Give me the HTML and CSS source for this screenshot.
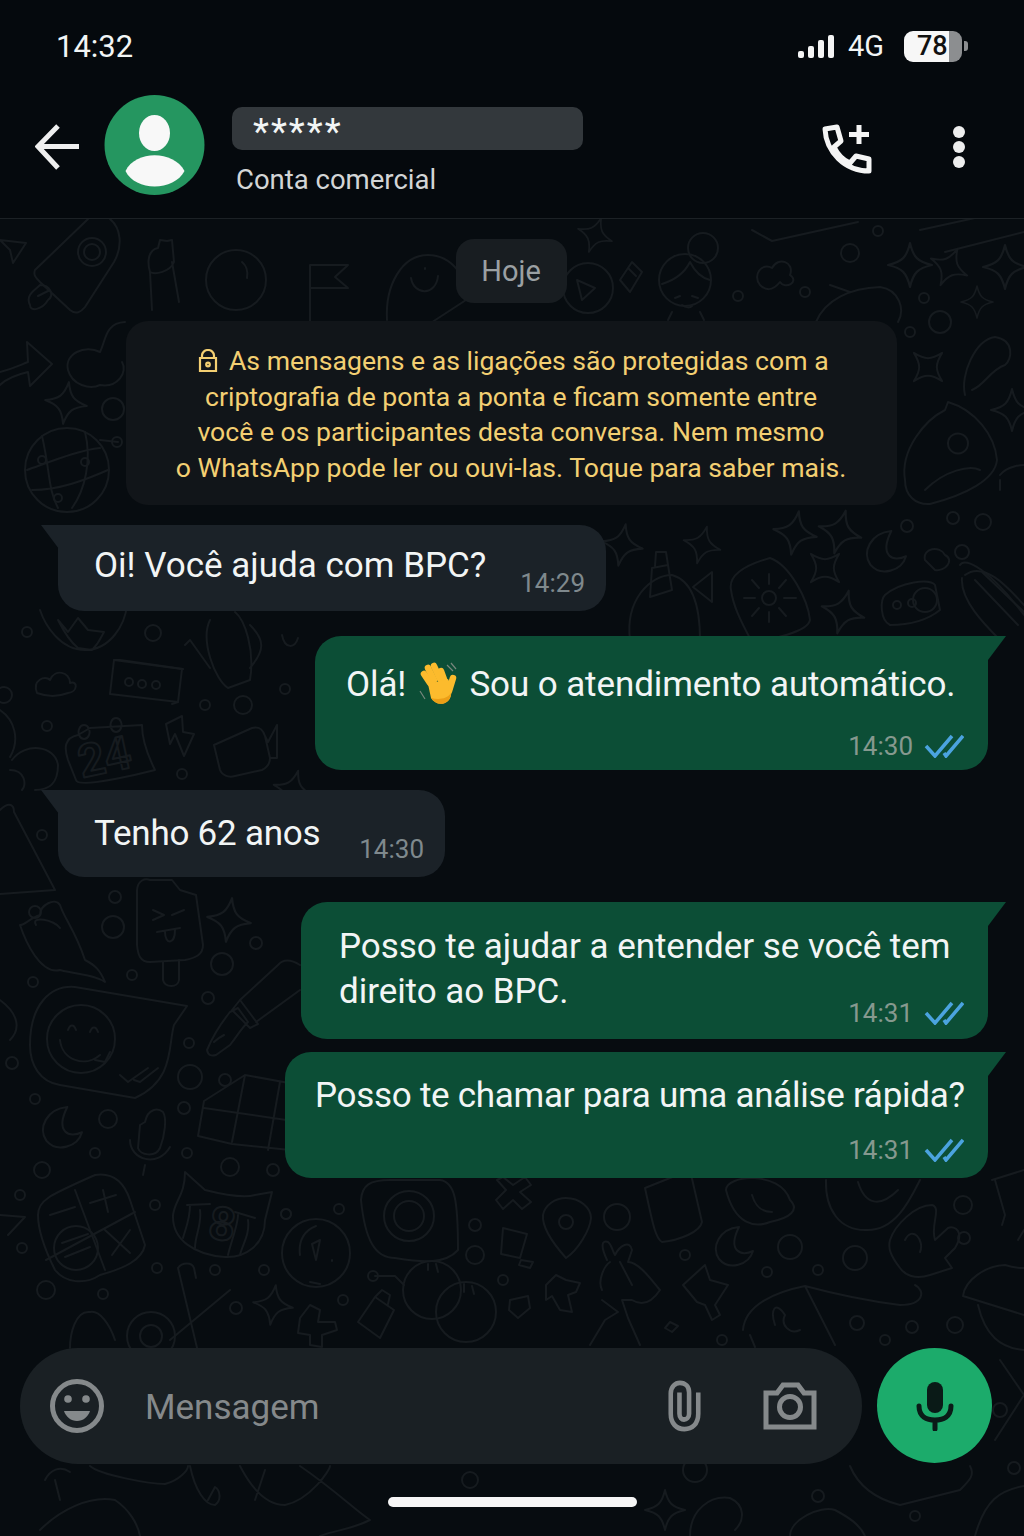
FILE: index.html
```html
<!DOCTYPE html>
<html lang="pt-BR">
<head>
    <meta charset="UTF-8">
    <title>Conversa</title>
    <link rel="stylesheet" href="styles.css">
</head>
<body>
    <div class="status-bar">
        <span class="clock">14:32</span>
        <div class="status-right">
            <div class="signal">
                <span class="bar bar1"></span>
                <span class="bar bar2"></span>
                <span class="bar bar3"></span>
                <span class="bar bar4"></span>
            </div>
            <span class="network">4G</span>
            <div class="battery">
                <div class="battery-body">
                    <div class="battery-fill">78</div>
                    <div class="battery-rest"></div>
                </div>
                <div class="battery-nub"></div>
            </div>
        </div>
    </div>

    <div class="header">
        <svg class="back" viewBox="0 0 46 46">
            <path d="M44 22.500H4M23 2 3 22.500 23 44"/>
        </svg>
        <svg class="avatar" viewBox="0 0 100 100">
            <circle class="avatar-bg" cx="50" cy="50" r="50"/>
            <ellipse class="avatar-fg" cx="50" cy="38" rx="15.500" ry="18"/>
            <path class="avatar-fg" d="M21 76C31 55 69 55 80 76 70 96 31 97 21 76Z"/>
        </svg>
        <div class="contact">
            <div class="contact-name">*****</div>
            <div class="contact-sub">Conta comercial</div>
        </div>
        <div class="actions">
            <svg class="add-call" viewBox="0 0 50 50">
                <path d="M3 5 15 3 19 17 12 23C16 31 21 36 28 39L34 32 47 35 47 47C23 47 4 28 3 5Z"/>
                <path d="M27 10.500H47M37 1V20"/>
            </svg>
            <div class="dots">
                <span></span>
                <span></span>
                <span></span>
            </div>
        </div>
    </div>

    <div class="chat">
        <svg class="wallpaper" viewBox="0 219 1024 1317">
            <defs>
                <path id="star" d="M0-20C3-7 7-3 20 0 7 3 3 7 0 20-3 7-7 3-20 0-7-3-3-7 0-20Z"/>
                <path id="moon" d="M6-20C-14-18-22 0-14 12-4 24 16 18 20 4 8 10-6 4 6-20Z"/>
            </defs>

            <!-- top left -->
            <path d="M0 240 26 243 13 263 10 250Z"/>
            <path d="M35 270C33 275 36 278 40 282L70 310C76 315 81 312 85 307L114 262C123 246 121 228 110 219M35 270 88 219"/>
            <circle cx="92" cy="252" r="14"/><circle cx="92" cy="252" r="8"/>
            <path d="M30 305C25 295 35 290 40 285 50 285 55 295 48 300 42 310 30 312 30 305ZM38 296 50 290"/>
            <path d="M150 272C147 262 148 250 158 248L160 240 167 241 172 240 174 262C170 272 155 275 150 272ZM150 272 152 310M172 262 179 302"/>
            <circle cx="236" cy="280" r="30"/><path d="M242 262C247 266 248 272 247 278"/>
            <path d="M310 330V265H348L335 277 348 288H310"/>
            <path d="M387 320C385 285 402 255 428 255 452 255 470 280 466 300L420 330"/>
            <path d="M411 278C414 296 436 296 438 276M425 268V269"/>
            <path d="M0 372C15 368 20 365 28 362L27 342 52 364 30 386 28 372C15 375 5 380 0 385"/>
            <path d="M125 322C105 323 106 340 100 352 85 344 64 354 68 370 72 385 90 390 100 385 118 388 128 372 122 362"/>
            <use href="#star" transform="translate(66 403) rotate(8) scale(1.050)"/>
            <circle cx="67" cy="470" r="42"/>
            <path d="M42 436C50 470 48 490 58 508M27 470C55 460 80 450 100 448M32 490C60 490 85 480 108 470M85 432C92 460 85 490 72 508M100 440 118 442"/>
            <circle cx="42" cy="460" r="4"/><circle cx="85" cy="462" r="4"/><circle cx="58" cy="498" r="4"/>
            <circle cx="117" cy="442" r="5"/><circle cx="113" cy="409" r="11"/>

            <!-- top, behind the date and the notice -->
            <use href="#star" transform="translate(595 235) rotate(20) scale(.9)"/>
            <circle cx="588" cy="288" r="25"/><path d="M577 280 595 288 582 300Z"/>
            <path d="M620 280 632 262 642 272 630 292ZM628 268 636 276"/>
            <circle cx="685" cy="280" r="26"/><circle cx="703" cy="248" r="15"/>
            <path d="M662 284C675 280 685 272 690 262 695 272 702 278 710 280M675 298 680 296M692 296 698 298M682 305C686 308 690 308 692 306M668 320 672 312M700 312 704 320"/>
            <path d="M760 285C752 275 762 262 772 268 778 256 795 262 790 275 800 282 785 290 780 282 772 292 765 290 760 285Z"/>
            <path d="M752 230 772 241 858 222M816 322C825 300 850 288 880 287 900 290 905 310 898 322M830 285 850 292"/>
            <path d="M920 230 975 218M945 252 1024 232"/>
            <circle cx="850" cy="253" r="9"/><circle cx="738" cy="296" r="5"/><circle cx="805" cy="292" r="5"/><circle cx="878" cy="231" r="5"/><circle cx="924" cy="298" r="5"/><circle cx="940" cy="322" r="11"/><circle cx="910" cy="332" r="5"/>
            <use href="#star" transform="translate(910 265) scale(1.100)"/>
            <use href="#star" transform="translate(949 267) rotate(25) scale(1)"/>
            <use href="#star" transform="translate(1005 267) scale(1.100)"/>
            <use href="#star" transform="translate(977 302) scale(.8)"/>

            <!-- right column -->
            <use href="#star" transform="translate(928 367) rotate(45) scale(1)"/>
            <path d="M965 395C960 375 975 340 995 337 1015 340 1012 360 1005 365 990 370 985 385 972 390"/>
            <use href="#star" transform="translate(1012 410) scale(1.050)"/>
            <path d="M905 480C900 450 925 420 945 410L948 402C975 410 995 435 997 460 995 480 965 495 930 504 915 505 905 495 905 480ZM925 490C945 470 970 465 980 470M948 444A10 10 0 1 0 948 443Z"/>
            <path d="M1000 475C1008 465 1024 465 1024 465M1000 480V490"/>
            <use href="#star" transform="translate(795 533) rotate(10) scale(1.100)"/>
            <use href="#star" transform="translate(840 532) rotate(15) scale(1.100)"/>
            <use href="#moon" transform="translate(885 552) scale(1.050)"/>
            <use href="#star" transform="translate(825 568) rotate(45) scale(1)"/>
            <use href="#star" transform="translate(622 545) rotate(10) scale(1.050)"/>
            <use href="#star" transform="translate(702 545) rotate(15) scale(.95)"/>
            <use href="#star" transform="translate(843 612) rotate(15) scale(1.100)"/>
            <path d="M925 560C922 548 940 545 945 555 955 560 945 572 935 570ZM960 565C965 556 990 570 1024 615"/>
            <circle cx="953" cy="518" r="6"/><circle cx="983" cy="522" r="8"/><circle cx="907" cy="526" r="6"/><circle cx="962" cy="552" r="7"/>
            <path d="M652 568 668 565 672 590 650 597ZM655 566 656 552H666L668 565"/>
            <path d="M693 587 712 572 712 602Z"/>
            <path d="M731 590C728 575 745 565 770 558 790 565 808 600 810 620 808 632 770 640 752 642 740 620 733 605 731 590Z"/>
            <circle cx="769" cy="598" r="7"/>
            <path d="M769 584V574M784 598H796M769 612V622M755 598H744M779 588 786 580M779 608 786 616M759 608 752 616M759 588 752 580"/>
            <path d="M885 595C900 582 930 578 935 585L940 610C925 622 905 625 890 625 880 620 880 600 885 595Z"/>
            <circle cx="897" cy="605" r="4"/><circle cx="912" cy="603" r="4"/><circle cx="925" cy="600" r="12"/>
            <path d="M965 575C985 560 1010 590 1024 605M962 578C960 600 985 625 1000 640M975 580 1018 625M982 572 1024 612"/>
            <path d="M630 640C625 600 650 575 672 575 690 580 700 600 700 640"/>

            <!-- left, middle -->
            <path d="M40 610C45 625 60 650 85 650 110 650 125 625 127 605M58 620C62 628 68 640 78 648L92 650C100 642 102 635 104 632L88 630 78 618 68 632Z"/>
            <path d="M37 693C32 680 45 675 50 680 55 668 70 672 70 683 78 680 78 692 68 693 55 698 45 696 37 693Z"/>
            <path d="M114 660 182 669 178 702 110 694Z"/><path d="M114 660 120 660 183 669M178 702 172 704"/>
            <circle cx="129" cy="682" r="4"/><circle cx="142" cy="684" r="4"/><circle cx="156" cy="685" r="4"/>
            <path d="M210 620C200 640 215 680 228 688L250 680C255 650 245 620 235 612M185 645 190 640 210 668M250 625C265 640 265 650 250 668"/>
            <path d="M78 735C64 738 64 748 68 760L76 780C78 790 155 770 155 770 145 750 142 735 142 725L90 728ZM84 725A5.500 7 0 1 0 84.100 725ZM116 718A5.500 7 0 1 0 116.100 718Z"/>
            <text class="doodle-num" x="82" y="778" transform="rotate(-12 82 778)">24</text>
            <path d="M166 724 182 716 183 732 194 734 184 756 175 734 170 744Z"/>
            <path d="M214 745 252 728C260 726 263 730 265 736L270 758C270 764 266 768 262 770L235 776C228 778 222 775 220 770ZM265 736 268 742 277 725 277 758 270 758"/>
            <path d="M0 710C15 720 20 740 10 757M12 760C25 742 55 745 58 765 58 785 48 790 35 790M10 770C25 770 27 785 22 790"/>
            <path d="M0 810C10 800 14 806 14 812L55 890 0 894"/>
            <circle cx="153" cy="633" r="8"/><circle cx="27" cy="632" r="5"/><circle cx="243" cy="705" r="9"/><circle cx="205" cy="705" r="5"/><circle cx="285" cy="689" r="5"/><circle cx="182" cy="774" r="5"/><circle cx="47" cy="726" r="5"/><circle cx="42" cy="835" r="5"/><circle cx="4" cy="695" r="8"/>
            <path d="M282 635C285 650 295 648 298 638"/>
            <use href="#star" transform="translate(293 790) rotate(15) scale(1)"/>

            <!-- left, lower -->
            <path d="M20 925C25 940 40 975 60 970 80 975 95 975 105 982 100 970 95 965 85 960 75 930 65 920 60 905 55 897 40 905 40 915 30 918 25 925 20 925Z"/>
            <path d="M36 925C30 915 55 920 60 928"/>
            <path d="M137 890C138 880 145 878 150 880H172L180 890 196 895 203 945C203 955 195 958 185 960L150 962C140 962 138 955 137 945Z"/>
            <path d="M163 962V980C165 988 178 988 179 980V960"/>
            <path d="M153 910 164 915 153 920M184 910 172 915M157 932 180 928M165 932C165 945 175 945 175 930"/>
            <use href="#star" transform="translate(229 920) rotate(8) scale(1.100)"/>
            <path d="M30 1045C30 1005 50 985 75 987L187 1006 174 1025C168 1045 175 1080 135 1098L60 1085C40 1082 30 1065 30 1045Z"/>
            <circle cx="81" cy="1039" r="34"/>
            <path d="M60 1040C62 1060 85 1068 100 1055M68 1030C70 1024 74 1024 76 1030M90 1032C92 1026 96 1026 98 1032M95 1060 105 1062 110 1052"/>
            <path d="M120 1075 128 1082 148 1068M134 1080 140 1082 158 1068"/>
            <path d="M207 1050C208 1056 212 1056 216 1055L230 1045C238 1035 240 1030 248 1022L238 1008 230 1012C222 1022 212 1038 207 1050ZM232 1010 250 1028 258 1024 240 1000ZM240 1000 278 965C284 958 292 960 300 965M256 1022 300 990M214 1042C218 1038 222 1036 224 1035"/>
            <path d="M204 1101 245 1075 300 1085M245 1075 232 1142M280 1082 268 1150M198 1136 232 1144 290 1150M204 1101 198 1136M204 1108 300 1122"/>
            <use href="#moon" transform="translate(61 1128) scale(1.050)"/>
            <circle cx="108" cy="1119" r="9"/>
            <path d="M140 1125 145 1122C148 1108 158 1108 163 1112 167 1118 165 1135 160 1148 155 1158 140 1155 138 1148ZM130 1140C130 1160 158 1168 170 1147M145 1165 143 1175"/>
            <path d="M38 1215C38 1200 50 1195 95 1175 115 1172 125 1185 130 1200L145 1245C142 1260 125 1268 100 1275 85 1285 65 1283 55 1270 45 1250 38 1230 38 1215Z"/>
            <path d="M75 1190 105 1270M46 1260 135 1212M50 1215 75 1207M90 1203 116 1195M103 1190 108 1212M105 1230 130 1253M130 1230 112 1255"/>
            <circle cx="76" cy="1248" r="22"/><path d="M62 1243 88 1234M65 1257 90 1247"/>
            <path d="M185 1172 205 1190C225 1195 245 1198 255 1195L272 1192 265 1220C265 1245 245 1258 225 1257 195 1255 172 1240 173 1215 175 1200 185 1195 185 1172Z"/>
            <path d="M187 1205 210 1204M190 1205C190 1220 185 1230 183 1238M200 1210C202 1225 195 1235 195 1248M235 1212 255 1218M238 1215C238 1225 230 1245 228 1255M248 1220C250 1235 242 1245 240 1255"/>
            <text class="doodle-num" x="207" y="1238" transform="rotate(8 207 1238)">8</text>
            <circle cx="151" cy="1336" r="24"/><circle cx="151" cy="1336" r="11"/>
            <path d="M170 1340 230 1290M178 1268 198 1352M178 1268C182 1262 192 1262 194 1268L196 1278"/>
            <use href="#star" transform="translate(273 1305) rotate(8) scale(1)"/>
            <path d="M70 1348C70 1335 75 1310 90 1312 100 1310 110 1325 115 1340"/>
            <path d="M0 1000C20 1015 20 1030 10 1040"/><path d="M0 1215 25 1217 8 1235"/>
            <circle cx="20" cy="1195" r="5"/><circle cx="22" cy="1248" r="5"/>
            <circle cx="115" cy="897" r="6"/><circle cx="35" cy="912" r="6"/><circle cx="113" cy="927" r="11"/><circle cx="132" cy="975" r="5"/><circle cx="33" cy="982" r="5"/><circle cx="222" cy="964" r="11"/><circle cx="256" cy="943" r="6"/><circle cx="208" cy="998" r="6"/><circle cx="189" cy="1043" r="5"/><circle cx="190" cy="1077" r="12"/><circle cx="225" cy="1080" r="6"/><circle cx="12" cy="1063" r="6"/><circle cx="35" cy="1099" r="5"/><circle cx="184" cy="1108" r="6"/><circle cx="187" cy="1153" r="5"/><circle cx="95" cy="1153" r="5"/><circle cx="42" cy="1170" r="8"/><circle cx="155" cy="1205" r="5"/><circle cx="230" cy="1167" r="9"/><circle cx="273" cy="1170" r="6"/><circle cx="286" cy="1214" r="5"/><circle cx="157" cy="1268" r="5"/><circle cx="215" cy="1270" r="5"/><circle cx="264" cy="1270" r="5"/><circle cx="46" cy="1290" r="9"/><circle cx="103" cy="1294" r="5"/><circle cx="236" cy="1308" r="6"/>

            <!-- bottom strip -->
            <circle cx="316" cy="1253" r="34"/><path d="M300 1255C298 1240 305 1230 316 1226M312 1244 320 1240 316 1260Z M310 1282 320 1284M332 1260V1261"/>
            <path d="M361 1200C362 1185 370 1180 390 1180H440C455 1182 458 1200 458 1250 445 1265 420 1262 395 1258 375 1258 365 1240 361 1200Z"/>
            <circle cx="409" cy="1216" r="25"/><circle cx="409" cy="1216" r="15"/>
            <path d="M496 1200 506 1190 497 1180 503 1177 513 1185 525 1177 531 1185 520 1192 531 1202 522 1209 513 1200 503 1209Z"/>
            <path d="M566 1258C550 1240 542 1225 543 1215 545 1205 555 1198 566 1198 580 1198 591 1208 591 1218 590 1230 578 1250 566 1258Z"/>
            <circle cx="566" cy="1222" r="7"/><circle cx="617" cy="1217" r="13"/><circle cx="475" cy="1225" r="6"/><circle cx="475" cy="1255" r="9"/><circle cx="339" cy="1209" r="5"/><circle cx="286" cy="1214" r="5"/>
            <path d="M503 1228 527 1234 520 1258 501 1254Z"/><path d="M521 1260 533 1262 530 1268 519 1265Z"/>
            <path d="M645 1188 690 1170 702 1222C700 1232 680 1240 662 1242 655 1238 652 1220 645 1188Z"/>
            <path d="M726 1190C726 1175 780 1170 790 1200 800 1210 790 1218 770 1222 755 1228 735 1225 726 1190ZM752 1195C755 1205 760 1212 772 1212"/>
            <use href="#moon" transform="translate(733 1247) scale(1)"/>
            <circle cx="685" cy="1255" r="5"/><circle cx="790" cy="1247" r="12"/><circle cx="855" cy="1258" r="12"/><circle cx="767" cy="1272" r="5"/><circle cx="818" cy="1270" r="5"/><circle cx="964" cy="1238" r="6"/><circle cx="963" cy="1205" r="9"/>
            <path d="M826 1180C825 1210 840 1230 865 1230 895 1232 910 1200 920 1180M858 1182C865 1205 880 1208 898 1190"/>
            <path d="M890 1240C895 1225 915 1205 932 1205 942 1208 930 1225 935 1240L948 1228C955 1225 965 1232 955 1248L945 1258 952 1268 930 1275C915 1280 905 1275 900 1268 890 1255 888 1248 890 1240ZM905 1240C912 1225 925 1240 920 1252"/>
            <path d="M992 1180 1024 1170M995 1180 1005 1215 1002 1225M1024 1230 1018 1240"/>
            <path d="M963 1296C965 1280 985 1266 1005 1265 1015 1268 1024 1268 1024 1268M963 1296 1024 1315M978 1305C985 1335 1000 1348 1024 1350"/>
            <path d="M300 1318 310 1305 320 1310 318 1322 335 1322 337 1330 322 1335 322 1347 310 1345 310 1335 298 1333Z"/>
            <path d="M358 1322 375 1297 394 1310 380 1338ZM375 1297 382 1290 390 1295 388 1304"/>
            <circle cx="432" cy="1290" r="29"/><circle cx="466" cy="1312" r="30"/>
            <path d="M428 1264V1270M436 1264 438 1272M464 1284V1292M472 1286 474 1294"/>
            <path d="M375 1276 395 1276 404 1285"/><circle cx="373" cy="1276" r="5"/><circle cx="503" cy="1280" r="5"/><circle cx="343" cy="1300" r="5"/>
            <path d="M510 1300 528 1296 530 1308 518 1318 509 1310Z"/>
            <path d="M546 1285 556 1275 566 1280 580 1283 576 1292 568 1295 572 1312 560 1310 552 1296 546 1300Z"/>
            <path d="M607 1260C600 1245 602 1240 608 1242 612 1245 612 1250 615 1255 620 1245 630 1240 632 1250L628 1262C640 1262 655 1285 660 1290 650 1305 640 1305 632 1300L622 1300 628 1318 640 1345M602 1290C597 1280 605 1265 610 1262M602 1300 618 1312 605 1320 590 1345M620 1262 632 1285"/>
            <path d="M683 1285 705 1265 710 1280 728 1285 715 1305 720 1315 712 1320 705 1305 697 1302Z"/>
            <path d="M743 1330C745 1305 775 1292 805 1286 820 1290 860 1300 900 1305 925 1305 925 1290 915 1285M805 1286 835 1345M750 1335 755 1347M775 1325C770 1310 775 1300 785 1315 780 1325 790 1335 800 1330"/>
            <path d="M670 1322 678 1326 672 1332 665 1328Z"/>
            <circle cx="857" cy="1323" r="7"/><circle cx="912" cy="1327" r="6"/><circle cx="955" cy="1325" r="8"/><circle cx="885" cy="1340" r="5"/><circle cx="722" cy="1340" r="5"/>

            <!-- under the composer -->
            <path d="M40 1530C60 1510 90 1495 115 1500 130 1510 138 1525 140 1536"/>
            <path d="M45 1480C50 1470 60 1465 70 1472M60 1500 55 1480"/>
            <path d="M90 1466C100 1475 150 1484 165 1484 180 1480 188 1470 188 1466M190 1466C195 1490 205 1505 215 1505 222 1500 220 1490 215 1487L208 1500M240 1466C255 1495 270 1505 285 1505 310 1500 330 1470 330 1466M255 1500 265 1470M300 1466C335 1490 355 1510 370 1520 350 1530 335 1530 320 1536"/>
            <use href="#star" transform="translate(665 1510) scale(1)"/>
            <path d="M690 1536C690 1510 710 1495 730 1498 745 1505 745 1520 735 1530"/>
            <path d="M850 1466C860 1490 880 1500 900 1505L960 1490C970 1480 975 1475 970 1466"/>
            <path d="M790 1536C790 1520 820 1505 835 1510 850 1518 860 1525 865 1536"/>
            <circle cx="818" cy="1496" r="6"/><circle cx="915" cy="1516" r="5"/><circle cx="1014" cy="1468" r="6"/><circle cx="695" cy="1470" r="12"/><circle cx="470" cy="1480" r="8"/><circle cx="1000" cy="1410" r="7"/>
            <path d="M995 1440 1024 1395 1000 1360M975 1536C985 1500 1000 1490 1024 1486"/>
        </svg>

        <div class="chat-inner">
            <div class="date-chip">Hoje</div>
            <div class="notice">
                <p>
                    <svg class="lock" viewBox="0 0 20 24">
                        <path d="M4 9V6.500A6 5.500 0 0 1 16 6.500V9M2 9H18V22H2Z"/>
                        <circle cx="10" cy="15.500" r="1.800"/>
                    </svg>
                    As mensagens e as ligações são protegidas com a<br>
                    criptografia de ponta a ponta e ficam somente entre<br>
                    você e os participantes desta conversa. Nem mesmo<br>
                    o WhatsApp pode ler ou ouvi-las. Toque para saber mais.
                </p>
            </div>

            <div class="bubble in msg1">
                <span class="text">Oi! Você ajuda com BPC?</span>
                <span class="time">14:29</span>
            </div>

            <div class="bubble out msg2">
                <div class="text">Olá!
                    <svg class="wave" viewBox="0 0 42 44">
                        <path class="wave-lines" d="M30 3 36 9M34 1 39 7M3 29 8 37"/>
                        <g class="wave-fingers">
                            <path d="M13 21 7 12"/>
                            <path d="M17 18 11 6"/>
                            <path d="M23 17 17 4"/>
                            <path d="M28 20 24 9"/>
                            <path d="M32 29 36 16"/>
                        </g>
                        <path class="wave-palm" d="M11 22 31 17C35 24 36 34 31 39 25 44 18 42 14 36Z"/>
                        <path class="wave-shade" d="M14 36C18 42 25 44 31 39 33 37 34 34 34 31 30 37 22 38 14 36Z"/>
                    </svg>
                    Sou o atendimento automático.</div>
                <div class="meta">
                    <span class="time">14:30</span>
                    <svg class="ticks" viewBox="0 0 40 24"><path d="M2 12 11 22 28 2M20 19 22 22 39 2"/></svg>
                </div>
            </div>

            <div class="bubble in msg3">
                <span class="text">Tenho 62 anos</span>
                <span class="time">14:30</span>
            </div>

            <div class="bubble out msg4">
                <div class="text">Posso te ajudar a entender se você tem<br>direito ao BPC.</div>
                <div class="meta">
                    <span class="time">14:31</span>
                    <svg class="ticks" viewBox="0 0 40 24"><path d="M2 12 11 22 28 2M20 19 22 22 39 2"/></svg>
                </div>
            </div>

            <div class="bubble out msg5">
                <div class="text">Posso te chamar para uma análise rápida?</div>
                <div class="meta">
                    <span class="time">14:31</span>
                    <svg class="ticks" viewBox="0 0 40 24"><path d="M2 12 11 22 28 2M20 19 22 22 39 2"/></svg>
                </div>
            </div>

            <div class="composer">
                <div class="input-box">
                    <svg class="icon-emoji" viewBox="0 0 54 54">
                        <circle class="line" cx="27" cy="27" r="24.500"/>
                        <circle class="solid" cx="18" cy="20" r="3.800"/>
                        <circle class="solid" cx="36" cy="20" r="3.800"/>
                        <path class="solid" d="M14 32H40C38 38 33 42 27 42 21 42 16 38 14 32Z"/>
                    </svg>
                    <span class="placeholder">Mensagem</span>
                    <svg class="icon-clip" viewBox="0 0 36 54" preserveAspectRatio="none">
                        <path class="line" d="M33 13V35C33 46 26 51 18 51 9 51 3 45 3 35V14C3 7 8 3 13 3 19 3 23 7 23 13V35C23 39 20 41 17.500 41 15 41 12.500 39 12.500 35V13"/>
                    </svg>
                    <svg class="icon-camera" viewBox="0 0 54 48">
                        <path class="line" d="M3 11H14L20 3H35L41 11H51V45H3Z"/>
                        <circle class="line" cx="27" cy="25" r="10.500"/>
                    </svg>
                </div>
                <div class="mic-button">
                    <svg viewBox="0 0 40 50">
                        <rect x="12" y="1" width="16" height="31" rx="8"/>
                        <path class="mic-line" d="M4 25C4 36 12 39 20 39 28 39 36 36 36 25M20 39V48"/>
                    </svg>
                </div>
            </div>

            <div class="home-row">
                <div class="home-indicator"></div>
            </div>
        </div>
    </div>
</body>
</html>
```

FILE: styles.css
```css
* {
    box-sizing: border-box;
}

body {
    margin: 0;
    width: 1024px;
    height: 1536px;
    display: flex;
    flex-direction: column;
    overflow: hidden;
    font-family: Roboto, "Liberation Sans", sans-serif;
    background-color: #05090d;
    color: #f2f5f5;
}

/* status bar */
.status-bar {
    height: 92px;
    padding: 0 56px;
    display: flex;
    align-items: center;
    justify-content: space-between;
}

.clock {
    font-size: 31px;
}

.status-right {
    display: flex;
    align-items: center;
}

.signal {
    display: flex;
    align-items: flex-end;
    gap: 4px;
    height: 23px;
}

.bar {
    width: 6px;
    background-color: #f4f4f4;
    border-radius: 2px;
}

.bar1 { height: 7px; }
.bar2 { height: 12px; }
.bar3 { height: 18px; }
.bar4 { height: 23px; }

.network {
    font-size: 29px;
    margin-left: 14px;
    width: 56px;
}

.battery {
    display: flex;
    align-items: center;
    gap: 2px;
}

.battery-body {
    display: flex;
    width: 58px;
    height: 31px;
    border-radius: 9px;
    overflow: hidden;
}

.battery-fill {
    width: 45px;
    padding-left: 13px;
    background-color: #f7f7f7;
    color: #111;
    font-size: 27px;
    font-weight: 500;
    line-height: 31px;
}

.battery-rest {
    flex: 1;
    background-color: #8c8e90;
}

.battery-nub {
    width: 4px;
    height: 10px;
    background-color: #8c8e90;
    border-radius: 0 3px 3px 0;
}

/* header */
.header {
    height: 127px;
    padding: 3px 0 0 35px;
    display: flex;
    align-items: flex-start;
    border-bottom: 1px solid #1c2125;
}

.back {
    width: 46px;
    height: 46px;
    margin-top: 29px;
    fill: none;
    stroke: #efefef;
    stroke-width: 5;
}

.avatar {
    width: 101px;
    height: 100px;
    margin-left: 23px;
}

.avatar-bg { fill: #259660; }
.avatar-fg { fill: #f8f8f8; }

.contact {
    margin: 12px 0 0 27px;
}

.contact-name {
    width: 351px;
    height: 43px;
    padding: 6px 0 0 21px;
    background-color: #33383c;
    border-radius: 10px;
    font-size: 37px;
    line-height: 37px;
    letter-spacing: 2px;
}

.contact-sub {
    margin: 13px 0 0 4px;
    font-size: 27.5px;
    line-height: 34px;
    color: #d3d5d6;
}

.actions {
    margin-left: auto;
    padding: 29px 59px 0 0;
    display: flex;
    align-items: flex-start;
}

.add-call {
    width: 50px;
    height: 50px;
    fill: none;
    stroke: #f4f4f4;
    stroke-width: 5;
    stroke-linejoin: round;
}

.dots {
    display: flex;
    flex-direction: column;
    gap: 3px;
    margin: 2px 0 0 81px;
}

.dots span {
    width: 12px;
    height: 12px;
    background-color: #eee;
    border-radius: 50%;
}

/* chat area */
.chat {
    flex: 1;
    position: relative;
    background-color: #070c10;
}

.wallpaper {
    position: absolute;
    top: 0;
    left: 0;
    width: 1024px;
    height: 1317px;
    fill: none;
    stroke: #161b1f;
    stroke-width: 2;
    stroke-linejoin: round;
    stroke-linecap: round;
}

.doodle-num {
    font-size: 46px;
    font-weight: 700;
    font-family: Roboto, sans-serif;
}

.chat-inner {
    position: relative;
    height: 100%;
    display: flex;
    flex-direction: column;
    padding-top: 20px;
}

.date-chip {
    align-self: center;
    width: 111px;
    height: 64px;
    margin-right: 2px;
    background-color: #181d21;
    border-radius: 18px;
    color: #9ba0a3;
    font-size: 29px;
    line-height: 64px;
    text-align: center;
}

.notice {
    align-self: center;
    width: 771px;
    height: 184px;
    margin: 18px 2px 0 0;
    background-color: #111519;
    border-radius: 22px;
    color: #f3cf72;
    font-size: 26.6px;
    line-height: 35.7px;
    text-align: center;
}

.notice p {
    margin: 0;
    padding-top: 22px;
}

.lock {
    width: 20px;
    height: 24px;
    margin: 0 4px 0 5px;
    vertical-align: -3px;
    fill: none;
    stroke: #f3cf72;
    stroke-width: 2.2;
}

/* bubbles */
.bubble {
    position: relative;
    font-size: 35px;
}

.bubble::before {
    content: "";
    position: absolute;
    top: 0;
    width: 18px;
    height: 24px;
}

.text {
    white-space: nowrap;
}

.in {
    align-self: flex-start;
    display: flex;
    margin: 20px 0 0 58px;
    background-color: #1b2228;
    border-radius: 0 26px 26px 26px;
}

.in::before {
    left: -17px;
    background-color: #1b2228;
    clip-path: polygon(0 0, 100% 0, 100% 100%);
}

.out {
    align-self: flex-end;
    margin: 25px 36px 0 0;
    background-color: #0c4e36;
    border-radius: 26px 0 26px 26px;
}

.out::before {
    right: -18px;
    background-color: #0c4e36;
    clip-path: polygon(0 0, 100% 0, 0 100%);
}

.out + .out {
    margin-top: 13px;
}

.time {
    font-size: 26px;
    color: #7f898d;
}

.out .time {
    color: #86998f;
}

.meta {
    display: flex;
    justify-content: flex-end;
    align-items: center;
    gap: 11px;
    height: 30px;
}

.ticks {
    width: 40px;
    height: 24px;
    fill: none;
    stroke: #4ba3df;
    stroke-width: 3.5;
}

.wave {
    width: 42px;
    height: 44px;
    vertical-align: -10px;
    margin: 0 2px;
}

.wave-lines {
    fill: none;
    stroke: #77867c;
    stroke-width: 1.2;
}

.wave-fingers path {
    fill: none;
    stroke: #fcbb2d;
    stroke-width: 6.500;
    stroke-linecap: round;
}

.wave-palm { fill: #fcbb2d; }
.wave-shade { fill: #ec9f17; }

.msg1 {
    width: 548px;
    height: 86px;
    padding: 20px 21px 0 36px;
    justify-content: space-between;
}

.msg1 .time {
    padding-top: 23px;
}

.msg2 {
    width: 673px;
    height: 134px;
    padding: 26px 24px 0 31px;
}

.msg2 .text {
    letter-spacing: -0.1px;
}

.msg2 .meta {
    margin-top: 25px;
}

.msg3 {
    width: 387px;
    height: 87px;
    padding: 23px 21px 0 36px;
    justify-content: space-between;
}

.msg3 .text {
    letter-spacing: -0.23px;
}

.msg3 .time {
    padding-top: 21px;
}

.msg4 {
    width: 687px;
    height: 137px;
    padding: 22px 24px 0 38px;
    line-height: 45px;
}

.msg4 .text {
    letter-spacing: -0.05px;
}

.msg4 .meta {
    margin-top: -16px;
}

.msg5 {
    width: 703px;
    height: 126px;
    padding: 23px 24px 0 30px;
}

.msg5 .text {
    letter-spacing: -0.28px;
}

.msg5 .meta {
    margin-top: 19px;
}

/* composer */
.composer {
    margin-top: auto;
    padding: 0 32px 0 20px;
    display: flex;
    align-items: flex-start;
    gap: 15px;
}

.input-box {
    width: 842px;
    height: 116px;
    padding-left: 30px;
    display: flex;
    align-items: center;
    background-color: #1a2024;
    border-radius: 58px;
}

.line {
    fill: none;
    stroke: #85898b;
    stroke-width: 5;
}

.solid {
    fill: #85898b;
}

.icon-emoji {
    width: 54px;
    height: 54px;
}

.placeholder {
    margin: 2px 0 0 41px;
    width: 523px;
    font-size: 35px;
    color: #85898b;
}

.icon-clip {
    width: 33px;
    height: 52px;
}

.icon-camera {
    width: 54px;
    height: 48px;
    margin-left: 62px;
}

.mic-button {
    width: 115px;
    height: 115px;
    background-color: #1cab6b;
    border-radius: 50%;
    display: flex;
    align-items: center;
    justify-content: center;
}

.mic-button svg {
    width: 40px;
    height: 50px;
    fill: #0a1a17;
}

.mic-line {
    fill: none;
    stroke: #0a1a17;
    stroke-width: 5;
    stroke-linecap: round;
}

.home-row {
    height: 72px;
    padding-top: 33px;
    display: flex;
    justify-content: center;
}

.home-indicator {
    width: 249px;
    height: 10px;
    background-color: #f6f6f6;
    border-radius: 5px;
}
```
